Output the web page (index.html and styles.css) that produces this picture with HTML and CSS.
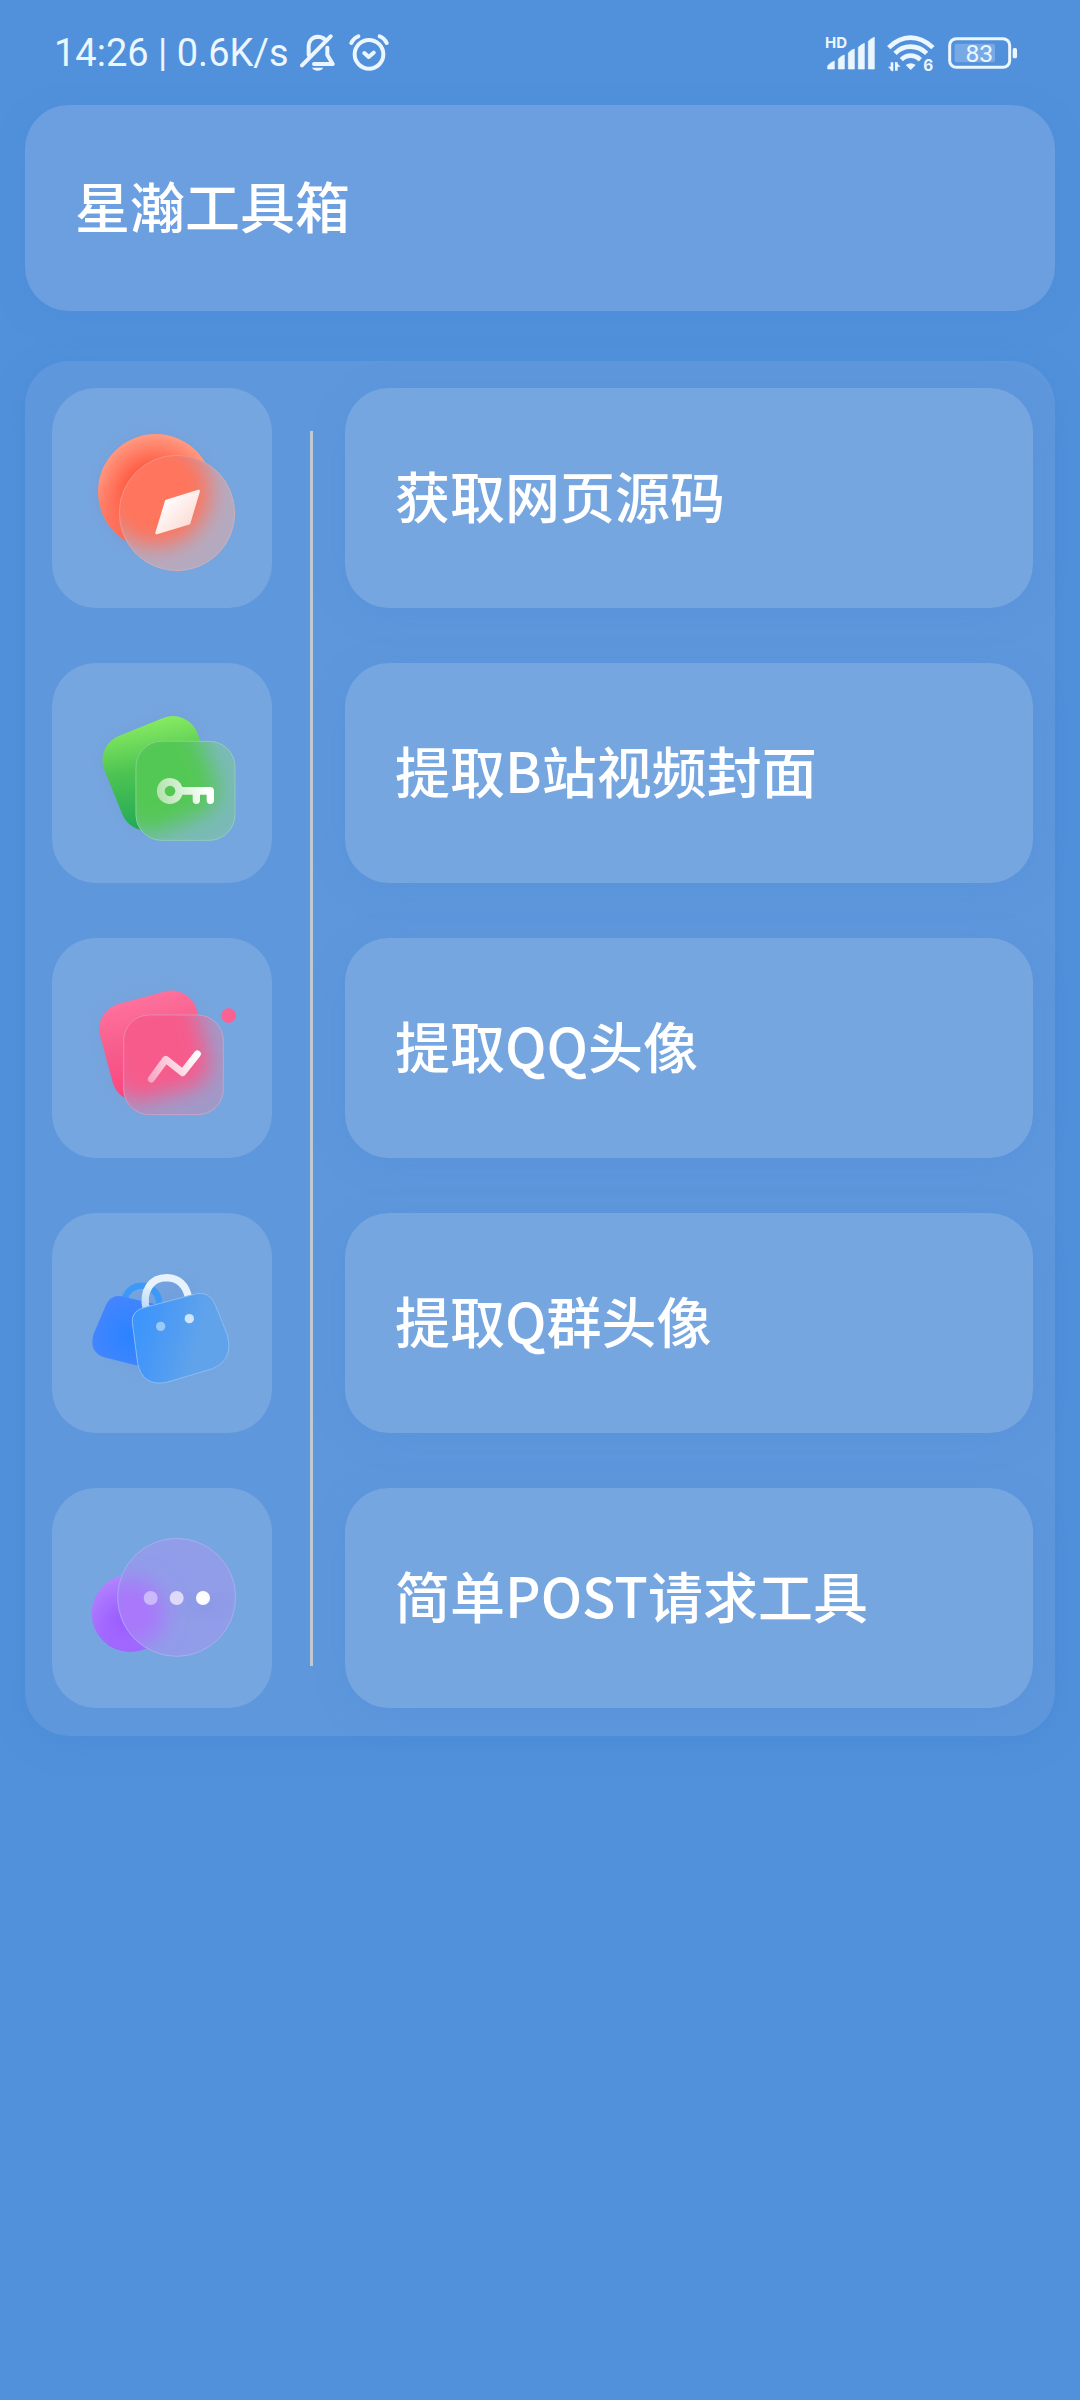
FILE: index.html
```html
<!DOCTYPE html>
<html lang="zh-CN">
<head>
<meta charset="utf-8">
<meta name="viewport" content="width=device-width, initial-scale=1">
<title>星瀚工具箱</title>
<link rel="stylesheet" href="styles.css">
</head>
<body>
<header class="status">
  <span class="clock">14:26 | 0.6K/s</span>
  <svg class="muted" width="36" height="40" viewBox="0 0 108 120" fill="none" stroke="currentColor" stroke-width="12" stroke-linecap="round" stroke-linejoin="round" aria-hidden="true">
    <path d="M26 66V42C26 24 36 12 53 11C62 11 70 14 75 20M82 44V66L98 93H42M6 97L92 10"/>
    <path d="M36 104H70C64 116 42 116 36 104Z" fill="currentColor" stroke="none"/>
  </svg>
  <svg class="alarm" width="40" height="40" viewBox="0 0 120 120" fill="none" stroke="currentColor" stroke-width="12" stroke-linecap="round" stroke-linejoin="round" aria-hidden="true">
    <circle cx="60" cy="64" r="43"/>
    <path d="M46 60L59 72L74 59M7 30Q14 15 28 10M92 10Q106 15 113 30"/>
  </svg>
  <svg class="signal" width="50" height="40" viewBox="0 0 150 120" fill="currentColor" aria-hidden="true">
    <text class="hd" x="0" y="46">HD</text>
    <path d="M8 108V98Q18 88 28 84V108ZM40 108V78Q49 68 58 66V108ZM70 108V60Q79 50 88 48V108ZM100 108V43Q109 34 118 31V108ZM130 108V25Q138 16 148 13V108Z" stroke="currentColor" stroke-width="2" stroke-linejoin="round"/>
  </svg>
  <svg class="wifi" width="52" height="44" viewBox="0 -6 156 132" fill="none" stroke="currentColor" stroke-width="14" aria-hidden="true">
    <path d="M5 44Q36 14 70 14Q106 14 138 44M24 61Q44 41 71 41Q98 41 119 61M43 80Q55 68 71 68Q87 68 100 80"/>
    <path d="M56 96Q71 85 86 96L71 111Z" fill="currentColor" stroke="none"/>
    <path d="M15 88V113M28 113V88" stroke-width="8"/>
    <path d="M3 101H18V116ZM25 86L41 101H25Z" fill="currentColor" stroke="none"/>
    <text class="band" x="109" y="115">6</text>
  </svg>
  <svg class="battery" width="70" height="32" viewBox="0 0 210 96" aria-hidden="true">
    <rect x="5" y="5" width="180" height="86" rx="20" fill="none" stroke="currentColor" stroke-width="9"/>
    <rect x="20" y="20" width="121" height="56" rx="6" fill="currentColor" opacity=".25"/>
    <rect x="194" y="33" width="13" height="31" rx="5" fill="currentColor"/>
    <text class="level" x="94" y="74" text-anchor="middle">83</text>
  </svg>
</header>

<main class="page">
  <h1 class="title">星瀚工具箱</h1>

  <section class="tools">
    <div class="divider"></div>

    <div class="tile">
      <svg viewBox="66 84 660 660" aria-hidden="true">
        <defs>
          <radialGradient id="compassBack" gradientUnits="userSpaceOnUse" cx="375" cy="405" r="190"><stop offset="0" stop-color="#ff5238"/><stop offset=".45" stop-color="#ff5a42"/><stop offset="1" stop-color="#ffa087"/></radialGradient>
          <linearGradient id="compassShade" x1="0" y1="0" x2="0" y2="1"><stop offset=".4" stop-color="#ff6450" stop-opacity="0"/><stop offset="1" stop-color="#fb6551"/></linearGradient>
          <linearGradient id="needle" x1="0" y1="0" x2="1" y2="1"><stop offset=".2" stop-color="#fff"/><stop offset="1" stop-color="#fbd0c8"/></linearGradient>
          <clipPath id="compassClip"><circle cx="441" cy="459" r="174"/></clipPath>
          <filter id="soft" x="-50%" y="-50%" width="200%" height="200%"><feGaussianBlur stdDeviation="32"/></filter>
          <filter id="glow" x="-50%" y="-50%" width="200%" height="200%"><feGaussianBlur stdDeviation="24"/></filter>
        </defs>
        <circle cx="377" cy="400" r="165" fill="#7a86c8" opacity=".45" filter="url(#glow)"/>
        <circle cx="377" cy="395" r="173" fill="url(#compassBack)"/>
        <circle cx="377" cy="395" r="173" fill="url(#compassShade)"/>
        <g clip-path="url(#compassClip)">
          <rect x="260" y="280" width="370" height="370" fill="#aeaac4"/>
          <circle cx="377" cy="395" r="165" fill="#ff7059" filter="url(#soft)"/>
          <circle cx="441" cy="459" r="174" fill="#ffb09e" opacity=".08"/>
        </g>
        <circle cx="441" cy="459" r="173" fill="none" stroke="#ffb5a6" stroke-width="3" opacity=".35"/>
        <path d="M409 423L506 393L477 490L380 519Z" fill="url(#needle)" stroke="url(#needle)" stroke-width="8" stroke-linejoin="round"/>
      </svg>
    </div>
    <button class="tool" type="button">获取网页源码</button>

    <div class="tile">
      <svg viewBox="66 69 660 660" aria-hidden="true">
        <defs>
          <linearGradient id="keyBack" gradientUnits="userSpaceOnUse" x1="420" y1="228" x2="350" y2="565"><stop offset="0" stop-color="#8cee63"/><stop offset=".45" stop-color="#4dc352"/><stop offset="1" stop-color="#1fa757"/></linearGradient>
          <linearGradient id="keyInk" gradientUnits="userSpaceOnUse" x1="380" y1="470" x2="550" y2="440"><stop offset="0" stop-color="#b1e2ab"/><stop offset=".9" stop-color="#fff"/></linearGradient>
          <clipPath id="keyClip"><rect x="317" y="303" width="299" height="299" rx="78"/></clipPath>
        </defs>
        <rect x="239" y="250" width="300" height="300" rx="78" fill="#7096d0" opacity=".35" transform="rotate(-22 389 400)" filter="url(#glow)"/>
        <rect x="239" y="250" width="300" height="300" rx="78" fill="url(#keyBack)" transform="rotate(-22 389 400)"/>
        <g clip-path="url(#keyClip)">
          <rect x="310" y="300" width="310" height="310" fill="#7ab8bd"/>
          <rect x="239" y="250" width="300" height="310" rx="78" fill="#50c84f" transform="rotate(-22 389 400)" filter="url(#soft)"/>
          <rect x="310" y="300" width="310" height="310" fill="#8bd088" opacity=".1"/>
        </g>
        <rect x="318" y="304" width="297" height="297" rx="77" fill="none" stroke="#b4e8c2" stroke-width="3" opacity=".4"/>
        <path fill-rule="evenodd" fill="url(#keyInk)" d="M420 414A39 39 0 0 1 457 441H540Q552 441 552 453V481A11 11 0 0 1 530 481V464H510V481A11 11 0 0 1 488 481V464H457A39 39 0 1 1 420 414ZM420 437A16 16 0 1 0 420 469A16 16 0 1 0 420 437Z"/>
      </svg>
    </div>
    <button class="tool" type="button">提取B站视频封面</button>

    <div class="tile">
      <svg viewBox="66 54 660 660" aria-hidden="true">
        <defs>
          <linearGradient id="chartBack" gradientUnits="userSpaceOnUse" x1="350" y1="225" x2="350" y2="540"><stop offset="0" stop-color="#ff719c"/><stop offset=".45" stop-color="#f65c8b"/><stop offset="1" stop-color="#ff3f7c"/></linearGradient>
          <linearGradient id="chartInk" gradientUnits="userSpaceOnUse" x1="355" y1="475" x2="505" y2="405"><stop offset="0" stop-color="#f8a6c4"/><stop offset="1" stop-color="#fff"/></linearGradient>
          <clipPath id="chartClip"><rect x="280" y="284" width="301" height="301" rx="78"/></clipPath>
        </defs>
        <rect x="224" y="228" width="300" height="300" rx="78" fill="#7d90cc" opacity=".3" transform="rotate(-15 374 378)" filter="url(#glow)"/>
        <rect x="224" y="228" width="300" height="300" rx="78" fill="url(#chartBack)" transform="rotate(-15 374 378)"/>
        <circle cx="596" cy="287" r="22" fill="#fa6291"/>
        <g clip-path="url(#chartClip)">
          <rect x="275" y="280" width="310" height="310" fill="#9a9bcb"/>
          <rect x="224" y="228" width="300" height="300" rx="78" fill="#fb5486" transform="rotate(-15 374 378)" filter="url(#soft)"/>
          <rect x="275" y="280" width="310" height="310" fill="#d795b6" opacity=".1"/>
        </g>
        <rect x="281" y="285" width="299" height="299" rx="77" fill="none" stroke="#ffb5cd" stroke-width="3" opacity=".4"/>
        <path d="M364 477L407 418L458 458L502 402" fill="none" stroke="url(#chartInk)" stroke-width="21" stroke-linecap="round" stroke-linejoin="round"/>
      </svg>
    </div>
    <button class="tool" type="button">提取QQ头像</button>

    <div class="tile">
      <svg viewBox="66 39 660 660" aria-hidden="true">
        <defs>
          <radialGradient id="bagBack" gradientUnits="userSpaceOnUse" cx="300" cy="405" r="125"><stop offset="0" stop-color="#2b83ff"/><stop offset="1" stop-color="#4585ff"/></radialGradient>
          <linearGradient id="bagFront" gradientUnits="userSpaceOnUse" x1="310" y1="400" x2="500" y2="450"><stop offset="0" stop-color="#3c95fd"/><stop offset=".3" stop-color="#4698f7"/><stop offset="1" stop-color="#60a3eb"/></linearGradient>
          <linearGradient id="bagHandle" x1="0" y1="1" x2=".6" y2="0"><stop offset="0" stop-color="#b9d8f8"/><stop offset=".6" stop-color="#e7f2fd"/></linearGradient>
        </defs>
        <path d="M215 440Q280 250 480 240L560 480L350 530Z" fill="#6d9bdc" opacity=".55" filter="url(#glow)"/>
        <path d="M284 298A52 52 0 1 1 386 320" fill="none" stroke="#3b99fa" stroke-width="19"/>
        <path d="M274 289L400 318V516L222 472Q175 455 191 401L228 315Q242 284 274 289Z" fill="url(#bagBack)"/>
        <path d="M349 330C335 270 365 233 410 233Q465 235 476 296" fill="none" stroke="url(#bagHandle)" stroke-width="22"/>
        <path d="M342 323L500 281Q537 274 555 312L592 405Q612 478 548 506L410 547Q338 561 323 490L307 367Q304 333 342 323Z" fill="url(#bagFront)" stroke="#8bbcf3" stroke-width="3"/>
        <circle cx="392" cy="379" r="14" fill="#9acafa"/>
        <circle cx="478" cy="356" r="14" fill="#d0e5f9"/>
      </svg>
    </div>
    <button class="tool" type="button">提取Q群头像</button>

    <div class="tile">
      <svg viewBox="66 54 660 660" aria-hidden="true">
        <defs>
          <radialGradient id="chatBack" gradientUnits="userSpaceOnUse" cx="285" cy="460" r="145"><stop offset="0" stop-color="#9a59ff"/><stop offset=".35" stop-color="#a066ff"/><stop offset="1" stop-color="#b385ff"/></radialGradient>
          <linearGradient id="chatShade" x1="0" y1="0" x2="0" y2="1"><stop offset=".5" stop-color="#a066ff" stop-opacity="0"/><stop offset="1" stop-color="#a066ff"/></linearGradient>
          <clipPath id="chatClip"><circle cx="440" cy="382" r="178"/></clipPath>
        </defs>
        <circle cx="301" cy="430" r="116" fill="url(#chatBack)"/>
        <circle cx="301" cy="430" r="116" fill="url(#chatShade)"/>
        <g clip-path="url(#chatClip)">
          <rect x="260" y="200" width="360" height="364" fill="#919de9"/>
          <circle cx="301" cy="430" r="105" fill="#a978fb" filter="url(#soft)"/>
          <ellipse cx="530" cy="408" rx="60" ry="20" fill="#8390df" opacity=".4" filter="url(#glow)"/>
        </g>
        <circle cx="440" cy="382" r="177" fill="none" stroke="#b1bdf4" stroke-width="3" opacity=".55"/>
        <circle cx="362" cy="384" r="21" fill="#ccb9fb"/>
        <circle cx="440" cy="384" r="21" fill="#dfdafa"/>
        <circle cx="519" cy="384" r="21" fill="#fdfdff"/>
      </svg>
    </div>
    <button class="tool" type="button">简单POST请求工具</button>
  </section>
</main>
</body>
</html>
```
FILE: styles.css
```css
* {
  box-sizing: border-box;
}

body {
  margin: 0;
  min-height: 100vh;
  background: #5191db;
  color: #fff;
  font-family: "Noto Sans CJK SC", "Noto Sans", sans-serif;
}

.status {
  display: flex;
  align-items: center;
  height: 105px;
  padding: 0 62px 0 54px;
  color: #ebf6ff;
  font-family: Roboto, "Noto Sans", sans-serif;
}

.status svg {
  flex: none;
}

.clock {
  font-size: 38px;
  line-height: 44px;
  white-space: nowrap;
}

.muted {
  margin-left: 11px;
}

.alarm {
  margin-left: 13px;
}

.signal {
  margin-left: auto;
}

.wifi {
  margin-left: 12px;
}

.battery {
  margin-left: 9px;
}

.hd {
  font: 700 45px Inter, sans-serif;
}

.band {
  font: 700 46px Inter, sans-serif;
  stroke: none;
  fill: currentColor;
}

.level {
  font: 400 74px Roboto, sans-serif;
  fill: currentColor;
}

.page {
  padding: 0 25px;
}

.title,
.tool {
  padding: 0 50px 8px;
  border-radius: 44px;
  font-size: 55px;
  font-weight: 500;
  line-height: 80px;
}

.title {
  display: flex;
  align-items: center;
  min-height: 206px;
  margin: 0 0 50px;
  background: #6b9fe0;
  box-shadow: 0 8px 30px rgba(70, 130, 210, .25);
}

.tools {
  display: grid;
  grid-template-columns: 220px 73px 1fr;
  grid-auto-rows: 220px;
  row-gap: 55px;
  padding: 27px 22px 28px 27px;
  border-radius: 44px;
  background: #5e97dc;
  box-shadow: 0 8px 30px rgba(70, 130, 210, .35);
}

.divider {
  grid-column: 2;
  grid-row: 1 / span 5;
  margin: 43px 32px 42px 38px;
  background: #c0c8d1;
}

.tile {
  grid-column: 1;
  border-radius: 44px;
  background: #76a6df;
}

.tile svg {
  display: block;
  width: 100%;
  height: 100%;
}

.tool {
  grid-column: 3;
  border: 0;
  background: #76a6df;
  box-shadow: 0 6px 30px rgba(80, 140, 215, .35);
  color: inherit;
  font-family: inherit;
  text-align: left;
  cursor: pointer;
}
```
